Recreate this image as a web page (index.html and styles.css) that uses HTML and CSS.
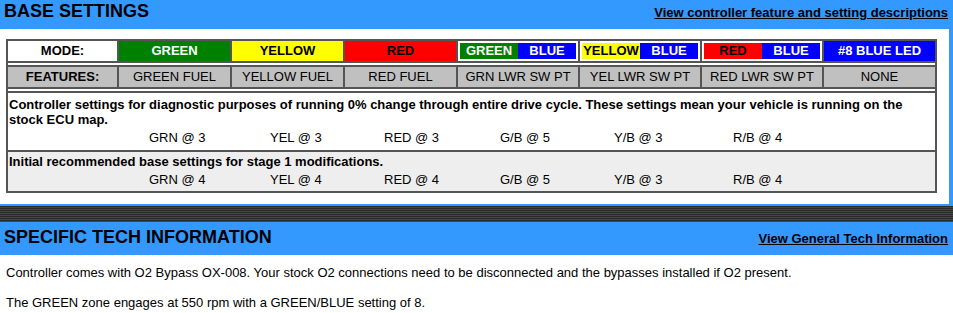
FILE: index.html
```html
<!DOCTYPE html>
<html lang="en">
<head>
  <meta charset="UTF-8">
  <meta name="viewport" content="width=device-width, initial-scale=1.0">
  <title>Controller Settings</title>
  <link rel="stylesheet" href="styles.css">
</head>
<body>
<div class="section-head top">
  <h2>BASE SETTINGS</h2>
  <a href="#">View controller feature and setting descriptions</a>
</div>

<div class="panel settings-panel">
  <table class="modes">
    <colgroup>
      <col class="c-label">
      <col class="c-one">
      <col class="c-one">
      <col class="c-one">
      <col class="c-two">
      <col class="c-two">
      <col class="c-two">
      <col class="c-one">
    </colgroup>
    <tr class="mode-row">
      <td class="label">MODE:</td>
      <td class="green">GREEN</td>
      <td class="yellow">YELLOW</td>
      <td class="red">RED</td>
      <td class="combo"><div class="pair"><span class="green">GREEN</span><span class="blue">BLUE</span></div></td>
      <td class="combo"><div class="pair"><span class="yellow">YELLOW</span><span class="blue">BLUE</span></div></td>
      <td class="combo"><div class="pair"><span class="red">RED</span><span class="blue">BLUE</span></div></td>
      <td class="blue">#8 BLUE LED</td>
    </tr>
    <tr class="gap"><td colspan="8"><div class="gap-fill"></div></td></tr>
    <tr class="feature-row">
      <td class="label">FEATURES:</td>
      <td>GREEN FUEL</td>
      <td>YELLOW FUEL</td>
      <td>RED FUEL</td>
      <td>GRN LWR SW PT</td>
      <td>YEL LWR SW PT</td>
      <td>RED LWR SW PT</td>
      <td>NONE</td>
    </tr>
    <tr class="gap"><td colspan="8"><div class="gap-fill"></div></td></tr>
    <tr class="desc-row">
      <td colspan="8">
        <p class="desc">Controller settings for diagnostic purposes of running 0% change through entire drive cycle. These settings mean your vehicle is running on the stock ECU map.</p>
        <div class="values">
          <span>GRN @ 3</span>
          <span>YEL @ 3</span>
          <span>RED @ 3</span>
          <span>G/B @ 5</span>
          <span>Y/B @ 3</span>
          <span>R/B @ 4</span>
        </div>
      </td>
    </tr>
    <tr class="desc-row alt">
      <td colspan="8">
        <p class="desc">Initial recommended base settings for stage 1 modifications.</p>
        <div class="values">
          <span>GRN @ 4</span>
          <span>YEL @ 4</span>
          <span>RED @ 4</span>
          <span>G/B @ 5</span>
          <span>Y/B @ 3</span>
          <span>R/B @ 4</span>
        </div>
      </td>
    </tr>
  </table>
</div>

<div class="divider"></div>

<div class="section-head">
  <h2>SPECIFIC TECH INFORMATION</h2>
  <a href="#">View General Tech Information</a>
</div>

<div class="panel tech-panel">
  <p>Controller comes with O2 Bypass OX-008. Your stock O2 connections need to be disconnected and the bypasses installed if O2 present.</p>
  <p>The GREEN zone engages at 550 rpm with a GREEN/BLUE setting of 8.</p>
</div>
</body>
</html>
```

FILE: styles.css
```css
* {
  box-sizing: border-box;
  margin: 0;
  padding: 0;
}
:root {
  --head-blue: #3399ff;
  --line: #555555;
  --feature-gray: #c0c0c0;
  --alt-gray: #eeeeee;
  --green: #008000;
  --yellow: #ffff00;
  --red: #ff0000;
  --blue: #0000ff;
}

body {
  font-family: "Liberation Sans", Arial, sans-serif;
  font-size: 13px;
  color: #000;
  background-color: #fff;
  overflow: hidden;
}

.section-head {
  display: flex;
  justify-content: space-between;
  align-items: baseline;
  background-color: var(--head-blue);
  padding: 5px 5px 6px 4px;
  line-height: 21px;
}

.section-head.top {
  padding-top: 1px;
}

.section-head h2 {
  font-size: 18px;
  font-weight: bold;
}

.section-head a {
  color: #000;
  font-size: 13px;
  font-weight: bold;
  text-decoration: underline;
}

.settings-panel {
  border-right: 4px solid var(--head-blue);
  border-bottom: 2px solid var(--head-blue);
  padding: 10px 0 11px 6px;
}

.modes {
  width: 930px;
  table-layout: fixed;
  border-collapse: collapse;
  border: 2px solid var(--line);
}

.c-label { width: 111px; }
.c-one { width: 113px; }
.c-two { width: 122px; }

.modes td {
  border: 2px solid var(--line);
  text-align: center;
  line-height: 16px;
  padding: 2px 1px;
  white-space: nowrap;
}

.mode-row td {
  font-weight: bold;
}

.label {
  font-weight: bold;
}

.green { background-color: var(--green); color: #fff; }
.yellow { background-color: var(--yellow); color: #000; }
.red { background-color: var(--red); color: #000; }
.blue { background-color: var(--blue); color: #fff; }

.modes td.combo {
  padding: 2px 2px;
  background-color: #fff;
}

.pair {
  display: flex;
}

.pair span {
  flex: 1;
  height: 16px;
  line-height: 16px;
}

.feature-row td {
  background-color: var(--feature-gray);
}

.modes .gap td {
  padding: 0;
  line-height: 0;
  font-size: 0;
  background-color: #fff;
}

.gap-fill {
  height: 2px;
}

.modes .desc-row td {
  text-align: left;
  white-space: normal;
  padding: 4px 1px 4px 1px;
  line-height: 15px;
}

.modes .desc-row.alt td {
  background-color: var(--alt-gray);
  padding: 2px 1px 3px 1px;
}

.desc {
  font-weight: bold;
}

.values {
  display: grid;
  grid-template-columns: 121px 114px 116px 114px 119px 1fr;
  padding-left: 140px;
  margin-top: 3px;
  line-height: 16px;
}

.divider {
  height: 16px;
  background: repeating-linear-gradient(to bottom, #2a2a2a 0, #2a2a2a 1px, #444 1px, #444 2px);
}

.tech-panel {
  padding: 10px 6px;
}

.tech-panel p {
  line-height: 15px;
  margin-bottom: 15px;
}
```
